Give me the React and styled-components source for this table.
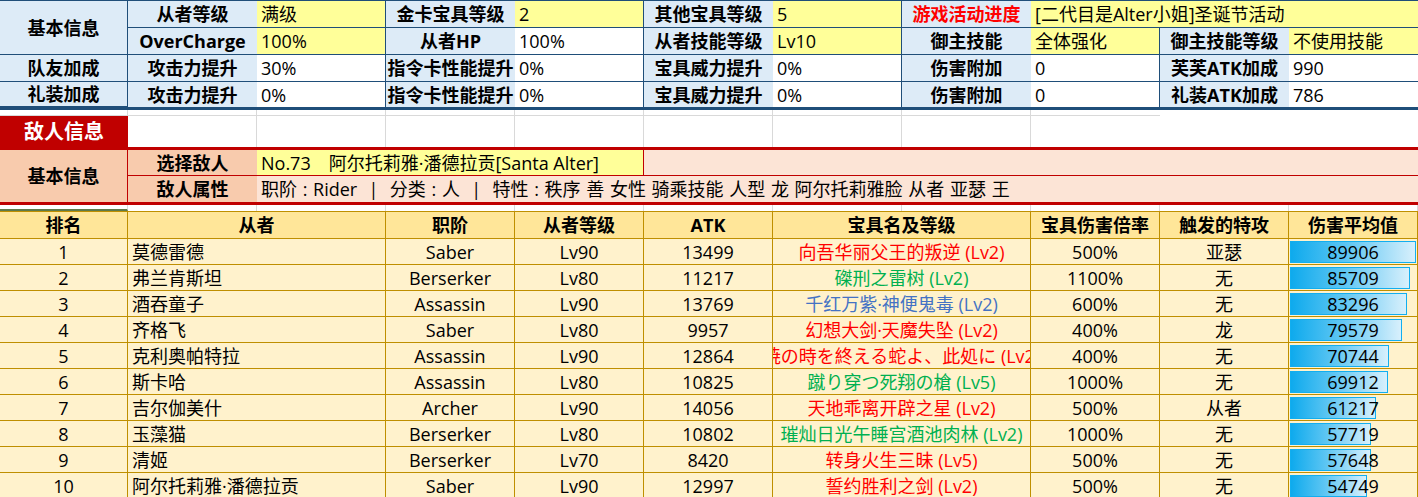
import styled, { createGlobalStyle } from "styled-components"

const BLUE_LINE = "#1F4E79"
const GRID_LINE = "#D9D9D9"
const GOLD_LINE = "#BF8F00"
const RED = "#C00000"
const LABEL_BG = "#DDEBF7"
const YELLOW = "#FFFF99"
const PEACH = "#F8CBAD"
const PINK = "#FCE4D6"

const COLS = "128px repeat(10, 129px)"
const TABLE_COLS = "128px 258px 129px 129px 129px 258px 129px 129px 129px"

const GlobalStyle = createGlobalStyle`
html, body {
  margin:0;
  padding:0;
  background:#fff;
}
body {
  font-family:"Open Sans", "Noto Sans CJK SC", "Noto Sans CJK JP", sans-serif;
  font-size:18px;
  color:#000;
}
`

const Page = styled.div`
width:1418px;
height:497px;
overflow:hidden;
`

const Sheet = styled.div`
display:grid;
grid-template-columns:${p => p.$cols || COLS};
grid-template-rows:${p => p.$rows};
box-sizing:border-box;
width:1418px;
border-top:${p => p.$top || "none"};
border-bottom:${p => p.$bottom || "none"};
border-right:${p => p.$right || "none"};
`

const Cell = styled.div`
box-sizing:border-box;
display:flex;
align-items:center;
justify-content:${p => (p.$left ? "flex-start" : "center")};
padding:${p => (p.$left ? "0 4px" : "0")};
background:${p => p.$bg || "#fff"};
color:${p => p.$color || "#000"};
font-weight:${p => (p.$bold ? 700 : 400)};
font-size:${p => p.$size || "18px"};
border-right:${p => p.$br || "none"};
border-bottom:${p => p.$bb || "none"};
grid-column:${p => (p.$span ? `span ${p.$span}` : "auto")};
grid-row:${p => (p.$rowSpan ? `span ${p.$rowSpan}` : "auto")};
white-space:pre;
overflow:hidden;
line-height:1;
`

const AttrCell = styled(Cell)`
word-spacing:1px;
`

const BarCell = styled.div`
box-sizing:border-box;
display:grid;
background:#FFF2CC;
border-right:1px solid ${GOLD_LINE};
border-bottom:1px solid ${GOLD_LINE};
overflow:hidden;
`

const Bar = styled.div`
grid-area:1 / 1;
box-sizing:border-box;
margin:2px 0 1px 1px;
border:1px solid #12AEEF;
background:linear-gradient(to right, #0EAAED 0%, #5EC6F3 45%, #D8F0FC 100%);
`

const BarValue = styled.div`
grid-area:1 / 1;
display:flex;
align-items:center;
justify-content:center;
line-height:1;
`

const line = c => `1px solid ${c}`

const L = (t, extra = {}) => ({ t, label: true, ...extra })
const V = (t, extra = {}) => ({ t, label: false, ...extra })

const topRows = [
  {
    head: "基本信息",
    headSpan: 2,
    cells: [
      L("从者等级"), V("满级", { y: 1 }),
      L("金卡宝具等级"), V("2", { y: 1 }),
      L("其他宝具等级"), V("5", { y: 1 }),
      L("游戏活动进度", { red: 1 }), V("[二代目是Alter小姐]圣诞节活动", { y: 1, span: 3 }),
    ],
  },
  {
    cells: [
      L("OverCharge"), V("100%", { y: 1 }),
      L("从者HP"), V("100%"),
      L("从者技能等级"), V("Lv10", { y: 1 }),
      L("御主技能"), V("全体强化", { y: 1 }),
      L("御主技能等级"), V("不使用技能", { y: 1 }),
    ],
  },
  {
    head: "队友加成",
    cells: [
      L("攻击力提升"), V("30%"),
      L("指令卡性能提升"), V("0%"),
      L("宝具威力提升"), V("0%"),
      L("伤害附加"), V("0"),
      L("芙芙ATK加成"), V("990"),
    ],
  },
  {
    head: "礼装加成",
    last: true,
    cells: [
      L("攻击力提升"), V("0%"),
      L("指令卡性能提升"), V("0%"),
      L("宝具威力提升"), V("0%"),
      L("伤害附加"), V("0"),
      L("礼装ATK加成"), V("786"),
    ],
  },
]

const servants = [
  [1, "莫德雷德", "Saber", "Lv90", 13499, "向吾华丽父王的叛逆 (Lv2)", "red", "500%", "亚瑟", 89906],
  [2, "弗兰肯斯坦", "Berserker", "Lv80", 11217, "磔刑之雷树 (Lv2)", "green", "1100%", "无", 85709],
  [3, "酒吞童子", "Assassin", "Lv90", 13769, "千红万紫·神便鬼毒 (Lv2)", "blue", "600%", "无", 83296],
  [4, "齐格飞", "Saber", "Lv80", 9957, "幻想大剑·天魔失坠 (Lv2)", "red", "400%", "龙", 79579],
  [5, "克利奥帕特拉", "Assassin", "Lv90", 12864, "暁の時を終える蛇よ、此処に (Lv2)", "red", "400%", "无", 70744],
  [6, "斯卡哈", "Assassin", "Lv80", 10825, "蹴り穿つ死翔の槍 (Lv5)", "green", "1000%", "无", 69912],
  [7, "吉尔伽美什", "Archer", "Lv90", 14056, "天地乖离开辟之星 (Lv2)", "red", "500%", "从者", 61217],
  [8, "玉藻猫", "Berserker", "Lv80", 10802, "璀灿日光午睡宫酒池肉林 (Lv2)", "green", "1000%", "无", 57719],
  [9, "清姬", "Berserker", "Lv70", 8420, "转身火生三昧 (Lv5)", "red", "500%", "无", 57648],
  [10, "阿尔托莉雅·潘德拉贡", "Saber", "Lv90", 12997, "誓约胜利之剑 (Lv2)", "red", "500%", "无", 54749],
]

const NP_COLORS = { red: "#FF0000", green: "#00B050", blue: "#4472C4" }
const HEADERS = ["排名", "从者", "职阶", "从者等级", "ATK", "宝具名及等级", "宝具伤害倍率", "触发的特攻", "伤害平均值"]
const MAX_DAMAGE = 89906
const BAR_MAX = 126

function BasicInfo() {
  return (
    <Sheet $rows="27px 27px 27px 25px" $top={line(BLUE_LINE)} $bottom={`3px solid ${BLUE_LINE}`} $right={`3px solid ${BLUE_LINE}`}>
      {topRows.map((row, r) => {
        const bb = row.last ? "none" : line(BLUE_LINE)
        return [
          row.head && (
            <Cell key={`h${r}`} $bg={LABEL_BG} $bold $rowSpan={row.headSpan} $br={line(BLUE_LINE)} $bb={line(BLUE_LINE)}>
              {row.head}
            </Cell>
          ),
          ...row.cells.map((c, i) => (
            <Cell
              key={`${r}-${i}`}
              $span={c.span}
              $bold={c.label}
              $left={!c.label}
              $bg={c.label ? LABEL_BG : c.y ? YELLOW : "#fff"}
              $color={c.red ? "#FF0000" : "#000"}
              $br={!c.label && i < row.cells.length - 1 ? line(BLUE_LINE) : "none"}
              $bb={bb}
            >
              {c.t}
            </Cell>
          )),
        ]
      })}
    </Sheet>
  )
}

function EnemyTitle() {
  const g = line(GRID_LINE)
  return (
    <Sheet $rows="6px 31px">
      {Array.from({ length: 11 }, (_, i) => (
        <Cell key={`a${i}`} $br={i < 8 ? g : "none"} $bb={i < 9 ? g : "none"} />
      ))}
      <Cell $bg={RED} $color="#fff" $bold $size="20px">敌人信息</Cell>
      {Array.from({ length: 10 }, (_, i) => (
        <Cell key={`b${i}`} $br={i < 7 ? g : "none"} />
      ))}
    </Sheet>
  )
}

function EnemyInfo() {
  const r = line(RED)
  return (
    <Sheet $rows="26px 26px" $top={`3px solid ${RED}`} $bottom={`3px solid ${RED}`} $right={`3px solid ${RED}`}>
      <Cell $bg={PEACH} $bold $rowSpan={2} $br={r}>基本信息</Cell>
      <Cell $bg={PEACH} $bold $bb={r}>选择敌人</Cell>
      <Cell $bg={YELLOW} $left $span={3} $br={r} $bb={r}>{"No.73　阿尔托莉雅·潘德拉贡[Santa Alter]"}</Cell>
      <Cell $bg={PINK} $span={6} $bb={r} />
      <Cell $bg={PEACH} $bold>敌人属性</Cell>
      <AttrCell $bg={PINK} $left $span={9}>
        {"职阶 : Rider  |  分类 : 人  |  特性 : 秩序 善 女性 骑乘技能 人型 龙 阿尔托莉雅脸 从者 亚瑟 王"}
      </AttrCell>
    </Sheet>
  )
}

const SpacerMark = styled(Cell)`
border-bottom:2px solid #5E7A4A;
`

function Spacer() {
  const g = line(GRID_LINE)
  return (
    <Sheet $rows="6px">
      <SpacerMark $br={g} />
      {Array.from({ length: 10 }, (_, i) => (
        <Cell key={i} $br={g} />
      ))}
    </Sheet>
  )
}

function DamageTable() {
  const gl = line(GOLD_LINE)
  return (
    <Sheet $cols={TABLE_COLS} $rows="27px repeat(10, 26px)" $top={gl} $right={gl}>
      {HEADERS.map(h => (
        <Cell key={h} $bg="#FFE699" $bold $br={gl} $bb={gl}>{h}</Cell>
      ))}
      {servants.map(([rank, name, cls, lv, atk, np, npColor, rate, special, dmg]) => [
        <Cell key={`r${rank}`} $bg="#FFF2CC" $br={gl} $bb={gl}>{rank}</Cell>,
        <Cell key={`n${rank}`} $bg="#FFF2CC" $left $br={gl} $bb={gl}>{name}</Cell>,
        <Cell key={`c${rank}`} $bg="#FFF2CC" $br={gl} $bb={gl}>{cls}</Cell>,
        <Cell key={`l${rank}`} $bg="#FFF2CC" $br={gl} $bb={gl}>{lv}</Cell>,
        <Cell key={`a${rank}`} $bg="#FFF2CC" $br={gl} $bb={gl}>{atk}</Cell>,
        <Cell key={`p${rank}`} $bg="#FFF2CC" $color={NP_COLORS[npColor]} $br={gl} $bb={gl}>{np}</Cell>,
        <Cell key={`m${rank}`} $bg="#FFF2CC" $br={gl} $bb={gl}>{rate}</Cell>,
        <Cell key={`s${rank}`} $bg="#FFF2CC" $br={gl} $bb={gl}>{special}</Cell>,
        <BarCell key={`d${rank}`}>
          <Bar style={{ width: `${Math.round((BAR_MAX * dmg) / MAX_DAMAGE)}px` }} />
          <BarValue>{dmg}</BarValue>
        </BarCell>,
      ])}
    </Sheet>
  )
}

export default function App() {
  return (
    <Page>
      <GlobalStyle />
      <BasicInfo />
      <EnemyTitle />
      <EnemyInfo />
      <Spacer />
      <DamageTable />
    </Page>
  )
}
